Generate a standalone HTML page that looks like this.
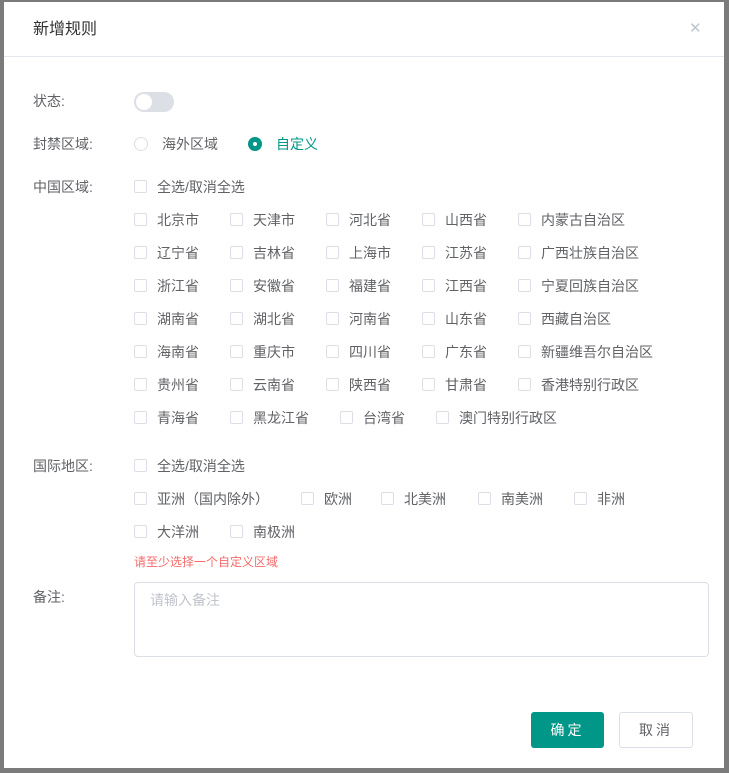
<!DOCTYPE html>
<html><head><meta charset="utf-8"><style>
*{margin:0;padding:0;box-sizing:border-box}
body{width:729px;height:773px;background:#7b7b7b;position:relative;overflow:hidden;font-family:"Liberation Sans","Noto Sans CJK SC",sans-serif;font-size:14px;color:#606266}
.dlg{position:absolute;left:4px;top:2px;width:720px;height:766px;background:#fff}
.a{position:absolute;white-space:nowrap;line-height:16px}
.cb{position:absolute;width:13px;height:13px;border:1px solid #dcdfe6;border-radius:2px;background:#fff}
.lbl{color:#606266}
</style></head><body>
<div class="dlg"></div>
<div class="a" style="left:33px;top:21px;font-size:16px;color:#303133;line-height:18px">新增规则</div>
<div class="a" style="left:689px;top:21px;font-size:15px;color:#c0c4cc">✕</div>
<div style="position:absolute;left:4px;top:56px;width:720px;height:1px;background:#e4e7ed"></div>

<div class="a lbl" style="left:33px;top:93px">状态:</div>
<div style="position:absolute;left:134px;top:92px;width:40px;height:20px;border-radius:10px;background:#dcdfe6"></div>
<div style="position:absolute;left:136px;top:94px;width:16px;height:16px;border-radius:50%;background:#fff"></div>

<div class="a lbl" style="left:33px;top:136px">封禁区域:</div>
<div style="position:absolute;left:134px;top:137px;width:14px;height:14px;border-radius:50%;border:1px solid #dcdfe6"></div>
<div class="a" style="left:162px;top:136px">海外区域</div>
<div style="position:absolute;left:248px;top:137px;width:14px;height:14px;border-radius:50%;background:#009688"></div>
<div style="position:absolute;left:253px;top:142px;width:4px;height:4px;border-radius:50%;background:#fff"></div>
<div class="a" style="left:276px;top:136px;color:#009688">自定义</div>

<div class="a lbl" style="left:33px;top:179px">中国区域:</div>
<div class="cb" style="left:134px;top:180px"></div><div class="a" style="left:157px;top:179px">全选/取消全选</div>

<div id="cn"></div>

<div class="a lbl" style="left:33px;top:458px">国际地区:</div>
<div class="cb" style="left:134px;top:459px"></div><div class="a" style="left:157px;top:458px">全选/取消全选</div>

<div class="a" style="left:134px;top:554px;font-size:12px;color:#f56c6c">请至少选择一个自定义区域</div>

<div class="a lbl" style="left:33px;top:589px">备注:</div>
<div style="position:absolute;left:134px;top:582px;width:575px;height:75px;border:1px solid #dcdfe6;border-radius:4px"></div>
<div class="a" style="left:150px;top:592px;color:#c0c4cc">请输入备注</div>

<div style="position:absolute;left:531px;top:712px;width:73px;height:36px;background:#009688;border-radius:3px;color:#fff;text-align:center;line-height:36px;letter-spacing:3px">确定</div>
<div style="position:absolute;left:619px;top:712px;width:74px;height:36px;border:1px solid #dcdfe6;border-radius:3px;color:#606266;text-align:center;line-height:34px;letter-spacing:3px">取消</div>

<script>
var rows=[
[[135,"北京市"],[231,"天津市"],[327,"河北省"],[423,"山西省"],[519,"内蒙古自治区"]],
[[135,"辽宁省"],[231,"吉林省"],[327,"上海市"],[423,"江苏省"],[519,"广西壮族自治区"]],
[[135,"浙江省"],[231,"安徽省"],[327,"福建省"],[423,"江西省"],[519,"宁夏回族自治区"]],
[[135,"湖南省"],[231,"湖北省"],[327,"河南省"],[423,"山东省"],[519,"西藏自治区"]],
[[135,"海南省"],[231,"重庆市"],[327,"四川省"],[423,"广东省"],[519,"新疆维吾尔自治区"]],
[[135,"贵州省"],[231,"云南省"],[327,"陕西省"],[423,"甘肃省"],[519,"香港特别行政区"]],
[[135,"青海省"],[231,"黑龙江省"],[341,"台湾省"],[437,"澳门特别行政区"]]];
var h="";
rows.forEach(function(r,i){var y=212+i*33;r.forEach(function(c){h+='<div class="cb" style="left:'+(c[0]-1)+'px;top:'+(y+1)+'px"></div><div class="a" style="left:'+(c[0]+22)+'px;top:'+y+'px">'+c[1]+'</div>';});});
var intl=[[[135,"亚洲（国内除外）"],[302,"欧洲"],[382,"北美洲"],[479,"南美洲"],[575,"非洲"]],[[135,"大洋洲"],[231,"南极洲"]]];
intl.forEach(function(r,i){var y=491+i*33;r.forEach(function(c){h+='<div class="cb" style="left:'+(c[0]-1)+'px;top:'+(y+1)+'px"></div><div class="a" style="left:'+(c[0]+22)+'px;top:'+y+'px">'+c[1]+'</div>';});});
document.getElementById("cn").outerHTML=h;
</script>
</body></html>
